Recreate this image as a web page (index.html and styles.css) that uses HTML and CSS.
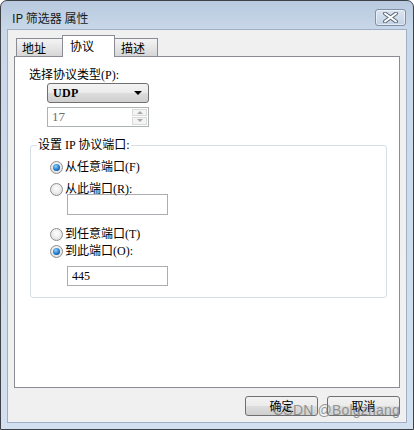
FILE: index.html
```html
<!DOCTYPE html>
<html lang="zh-CN">
<head>
<meta charset="utf-8">
<title>IP 筛选器 属性</title>
<link rel="stylesheet" href="styles.css">
</head>
<body>
<div class="window">
  <div class="titlebar">
    <span class="title">IP 筛选器 属性</span>
    <button class="close" aria-label="关闭">
      <svg width="17" height="11" viewBox="0 0 17 11">
        <path d="M3 1.5 L14 9.5 M14 1.5 L3 9.5" stroke="#5f6b7a" stroke-width="4" stroke-linecap="round"/>
        <path d="M3 1.5 L14 9.5 M14 1.5 L3 9.5" stroke="#ffffff" stroke-width="2" stroke-linecap="round"/>
      </svg>
    </button>
  </div>
  <div class="client">
    <div class="tabs">
      <div class="tab tab-first">地址</div>
      <div class="tab tab-active">协议</div>
      <div class="tab tab-last">描述</div>
    </div>
    <div class="panel">
      <div class="label">选择协议类型(P):</div>
      <div class="combo">
        <span class="combo-text">UDP</span>
        <span class="combo-arrow"></span>
      </div>
      <div class="spin">
        <span class="spin-text">17</span>
        <span class="spin-btns">
          <span class="spin-btn"><span class="tri-up"></span></span>
          <span class="spin-btn"><span class="tri-down"></span></span>
        </span>
      </div>
      <fieldset class="group">
        <legend>设置 IP 协议端口:</legend>
        <div class="group-body">
          <div class="radio-row r1"><span class="radio checked"></span>从任意端口(F)</div>
          <div class="radio-row r2"><span class="radio"></span>从此端口(R):</div>
          <div class="textbox tb1"></div>
          <div class="radio-row r3"><span class="radio"></span>到任意端口(T)</div>
          <div class="radio-row r4"><span class="radio checked"></span>到此端口(O):</div>
          <div class="textbox tb2">445</div>
        </div>
      </fieldset>
    </div>
    <div class="buttons">
      <button class="btn">确定</button>
      <button class="btn">取消</button>
    </div>
    <div class="watermark">CSDN @Bolgzhang</div>
  </div>
</div>
</body>
</html>
```
FILE: styles.css
```css
html, body {
  margin: 0;
  padding: 0;
  background: #ffffff;
}
body {
  font-family: "Noto Sans CJK SC", "DejaVu Sans", sans-serif;
  font-size: 12px;
  color: #000;
}
.window {
  width: 414px;
  height: 430px;
  box-sizing: border-box;
  border: 1px solid #3e4246;
  border-radius: 7px 7px 0 0;
  background: linear-gradient(to bottom, #b8cadf 0px, #c9d8e9 30px, #d3e0ef 100%);
  padding: 0 6px 6px 6px;
  display: flex;
  flex-direction: column;
}
.titlebar {
  height: 28px;
  box-sizing: border-box;
  padding-top: 5px;
  display: flex;
  align-items: center;
  justify-content: space-between;
}
.title {
  margin-left: 5px;
  color: #1a1a1a;
  font-size: 12px;
  line-height: 16px;
}
.close {
  width: 31px;
  height: 17px;
  margin-right: 1px;
  padding: 0;
  border: 1px solid #7f90a8;
  border-radius: 3px;
  background: linear-gradient(to bottom, #dbe5f0, #c3d2e4);
  display: flex;
  align-items: center;
  justify-content: center;
  box-shadow: inset 0 0 0 1px rgba(255,255,255,0.5);
}
.client {
  flex: 1;
  position: relative;
  background: #f0f0f0;
  border: 1px solid #9fb0c6;
  padding: 5px 6px 6px 6px;
  display: flex;
  flex-direction: column;
}
.tabs {
  display: flex;
  align-items: flex-end;
  padding-left: 2px;
  height: 21px;
  position: relative;
  z-index: 2;
}
.tab {
  box-sizing: border-box;
  border: 1px solid #898c95;
  border-bottom: none;
  height: 18px;
  line-height: 17px;
  font-size: 12px;
  padding-left: 5px;
  background: linear-gradient(to bottom, #f4f4f4 0%, #e6e6e6 50%, #d6d6d6 100%);
}
.tab-first {
  width: 46px;
  border-right: none;
}
.tab-active {
  width: 53px;
  height: 22px;
  margin-bottom: -1px;
  background: #ffffff;
  padding-left: 7px;
  line-height: 19px;
}
.tab-last {
  width: 43px;
  border-left: none;
  padding-left: 6px;
}
.panel {
  box-sizing: border-box;
  height: 332px;
  background: #ffffff;
  border: 1px solid #898c95;
  padding: 11px 11px 0 14px;
  position: relative;
  z-index: 1;
  font-family: "Liberation Serif", "Noto Sans CJK SC", serif;
}
.label {
  line-height: 15px;
  height: 15px;
}
.combo {
  box-sizing: border-box;
  width: 102px;
  height: 20px;
  margin-left: 18px;
  border: 1px solid #707070;
  border-radius: 3px;
  background: linear-gradient(to bottom, #f3f3f3 0%, #ebebeb 50%, #dddddd 51%, #cfcfcf 100%);
  display: flex;
  align-items: center;
  justify-content: space-between;
  padding: 0 6px 0 5px;
}
.combo-text {
  font-family: "Liberation Serif", "DejaVu Serif", serif;
  font-size: 12px;
  font-weight: bold;
  letter-spacing: 0.3px;
}
.combo-arrow {
  width: 0;
  height: 0;
  border-left: 4px solid transparent;
  border-right: 4px solid transparent;
  border-top: 4px solid #000;
}
.spin {
  box-sizing: border-box;
  width: 102px;
  height: 20px;
  margin: 4px 0 0 18px;
  border: 1px solid #adb2b5;
  background: #ffffff;
  display: flex;
  align-items: center;
  justify-content: space-between;
  padding: 0 1px 0 4px;
}
.spin-text {
  color: #6d6d6d;
  font-family: "Liberation Serif", serif;
  font-size: 13px;
}
.spin-btns {
  display: flex;
  flex-direction: column;
  gap: 0;
  height: 17px;
}
.spin-btn {
  width: 15px;
  height: 8px;
  box-sizing: border-box;
  border: 1px solid #d9d9d9;
  background: #f4f4f4;
  display: flex;
  align-items: center;
  justify-content: center;
  margin-bottom: 1px;
}
.tri-up {
  width: 0; height: 0;
  border-left: 3px solid transparent;
  border-right: 3px solid transparent;
  border-bottom: 3px solid #a8a8a8;
}
.tri-down {
  width: 0; height: 0;
  border-left: 3px solid transparent;
  border-right: 3px solid transparent;
  border-top: 3px solid #a8a8a8;
}
.group {
  margin: 11px 0 0 1px;
  width: 357px;
  box-sizing: border-box;
  border: 1px solid #d5dfe5;
  border-radius: 3px;
  padding: 0;
  min-width: 0;
}
.group legend {
  margin-left: 6px;
  padding: 0 1px;
  line-height: 15px;
  font-size: 12px;
}
.group-body {
  padding: 7px 0 11px 19px;
}
.radio-row {
  display: flex;
  align-items: center;
  height: 14px;
  line-height: 14px;
  gap: 2px;
}
.r2 { margin-top: 8px; }
.r3 { margin-top: 12px; }
.r4 { margin-top: 3px; }
.radio {
  width: 11px;
  height: 11px;
  border-radius: 50%;
  border: 1px solid #8f8f8f;
  background: radial-gradient(circle at 50% 40%, #ffffff 0%, #e8e8e8 60%, #cfcfcf 100%);
  display: inline-block;
  flex: none;
  position: relative;
}
.radio.checked::after {
  content: "";
  position: absolute;
  left: 2px;
  top: 2px;
  width: 7px;
  height: 7px;
  border-radius: 50%;
  background: radial-gradient(circle at 40% 35%, #8fd3ff 0%, #1e78c8 55%, #0d3f7a 100%);
}
.textbox {
  box-sizing: border-box;
  width: 101px;
  height: 21px;
  margin-left: 17px;
  border: 1px solid #abadb3;
  background: #fff;
  font-family: "Liberation Serif", serif;
  font-size: 12px;
  line-height: 19px;
  padding-left: 4px;
}
.tb1 { margin-top: -2px; }
.tb2 { margin-top: 8px; height: 20px; }
.buttons {
  display: flex;
  justify-content: flex-end;
  gap: 9px;
  margin-top: 8px;
}
.btn {
  box-sizing: border-box;
  width: 73px;
  height: 20px;
  padding: 0;
  border: 1px solid #707070;
  border-radius: 3px;
  background: linear-gradient(to bottom, #f2f2f2 0%, #ebebeb 50%, #dddddd 51%, #cfcfcf 100%);
  font-family: "Noto Sans CJK SC", sans-serif;
  font-size: 12px;
  line-height: 16px;
  color: #000;
}
.watermark {
  position: absolute;
  right: 6px;
  bottom: 4px;
  font-family: "Liberation Sans", Arial, sans-serif;
  font-size: 14px;
  color: rgba(120, 120, 120, 0.75);
  letter-spacing: 0.2px;
  pointer-events: none;
}
```
